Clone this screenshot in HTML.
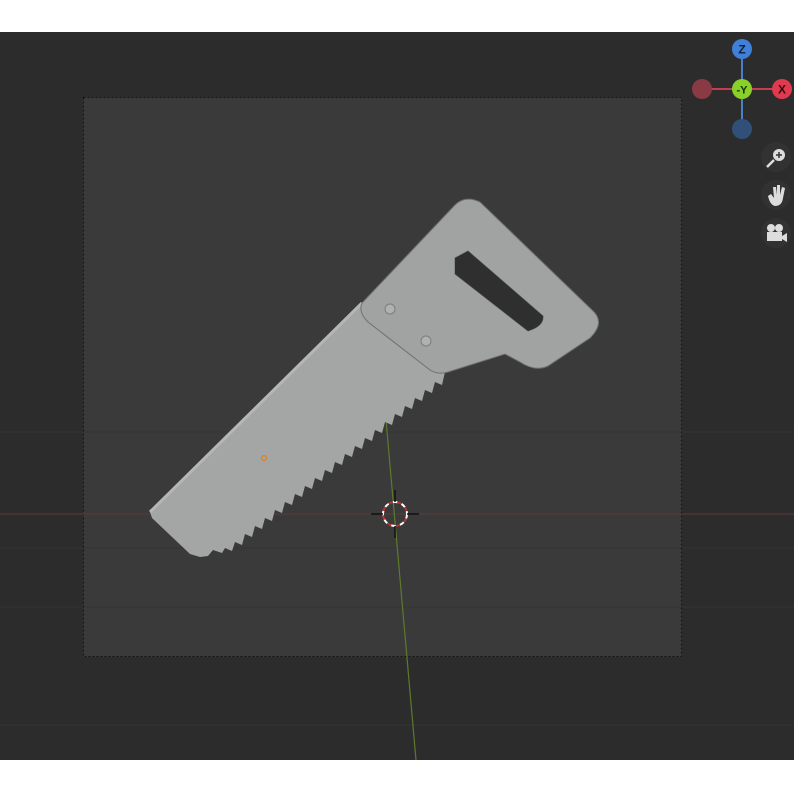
<!DOCTYPE html>
<html><head><style>
html,body{margin:0;padding:0;width:794px;height:794px;background:#fff;overflow:hidden;font-family:"Liberation Sans",sans-serif}
</style></head><body>
<svg width="794" height="794" xmlns="http://www.w3.org/2000/svg" style="position:absolute;left:0;top:0">
<rect x="0" y="32" width="794" height="728" fill="#2c2c2c"/>
<rect x="83" y="97" width="599" height="560" fill="#3a3a3a"/>
<g stroke="#343434" stroke-width="1">
<line x1="0" y1="432" x2="794" y2="432"/>
<line x1="0" y1="548" x2="794" y2="548"/>
<line x1="0" y1="607" x2="794" y2="607"/>
<line x1="0" y1="725" x2="794" y2="725"/>
</g>
<rect x="83.5" y="97.5" width="598" height="559" fill="none" stroke="#111" stroke-dasharray="2,2"/>
<line x1="0" y1="514" x2="794" y2="514" stroke="#5e3a3a" stroke-width="1"/>
<line x1="386" y1="420" x2="416" y2="760" stroke="#5c7a2c" stroke-width="1.2"/>
<path d="M150,512 L362,303 L445,372 L442,385 L435,382 L432,393 L425,390 L422,401 L415,398 L412,409 L405,406 L402,417 L395,414 L392,425 L385,422 L382,433 L375,430 L372,441 L365,438 L362,449 L355,446 L352,457 L345,454 L342,465 L335,462 L332,473 L325,470 L322,481 L315,478 L312,489 L305,486 L302,497 L295,494 L292,505 L285,502 L282,513 L275,510 L272,521 L265,518 L262,529 L255,526 L252,537 L245,534 L242,545 L235,542 L232,551 L225,548 L222,553 L213,550 L208,556 L200,557 L190,554 L152,518 Z" fill="#a4a6a6"/>
<path d="M150,512 L362,303" stroke="#b5b7b7" stroke-width="3"/>
<path d="M362,303 L455,205 Q465,195 480,202 L592,310 Q606,322 590,338 L548,366 Q535,372 520,362 L505,354 L448,372 Q438,375 430,370 L368,322 Q358,312 362,303 Z M455,258 L468,251 L543,316 Q544,326 528,331 L455,274 Z" fill="#a1a3a3" fill-rule="evenodd" stroke="#6f7171" stroke-width="1"/>
<path d="M455,258 L468,251 L543,316 Q544,326 528,331 L455,274 Z" fill="#2f2f2f"/>
<circle cx="390" cy="309" r="5" fill="#b0b2b2" stroke="#7c7e7e"/>
<circle cx="426" cy="341" r="5" fill="#b0b2b2" stroke="#7c7e7e"/>
<circle cx="264" cy="458" r="2.5" fill="none" stroke="#e08020" stroke-width="1.2"/>
<circle cx="395" cy="514" r="12" fill="none" stroke="#fff" stroke-width="2" stroke-dasharray="5,4"/>
<circle cx="395" cy="514" r="12" fill="none" stroke="#c03030" stroke-width="2" stroke-dasharray="4,5" stroke-dashoffset="4.5"/>
<g stroke="#111" stroke-width="1.5"><line x1="371" y1="514" x2="383" y2="514"/><line x1="407" y1="514" x2="419" y2="514"/><line x1="395" y1="490" x2="395" y2="502"/><line x1="395" y1="526" x2="395" y2="538"/></g>
<line x1="702" y1="89" x2="782" y2="89" stroke="#c04050" stroke-width="2"/>
<line x1="742" y1="49" x2="742" y2="129" stroke="#4a80c8" stroke-width="2"/>
<circle cx="702" cy="89" r="10" fill="#8a3a44"/>
<circle cx="742" cy="129" r="10" fill="#30507a"/>
<circle cx="742" cy="49" r="10" fill="#3f80d8"/>
<circle cx="782" cy="89" r="10" fill="#e03a50"/>
<circle cx="742" cy="89" r="10" fill="#8ad02a"/>
<text x="742" y="53.5" font-size="12" font-weight="bold" text-anchor="middle" fill="#10203a" font-family="Liberation Sans">Z</text>
<text x="782" y="93.5" font-size="12" font-weight="bold" text-anchor="middle" fill="#3a0a10" font-family="Liberation Sans">X</text>
<text x="742" y="93.5" font-size="11" font-weight="bold" text-anchor="middle" fill="#1a3008" font-family="Liberation Sans">-Y</text>
<circle cx="776" cy="157" r="15" fill="#323232"/>
<circle cx="776" cy="195" r="15" fill="#323232"/>
<circle cx="776" cy="233" r="15" fill="#323232"/>
<circle cx="779" cy="155" r="6" fill="#ddd"/>
<line x1="774" y1="160" x2="767" y2="167" stroke="#ddd" stroke-width="2.5"/>
<path d="M776,155h6M779,152v6" stroke="#333" stroke-width="1.5"/>
<path d="M768,196 L771,194 L774,198 L773,187 L776,187 L777,195 L777,185 L780,185 L780,195 L782,187 L785,188 L783,198 Q782,206 775,206 Q770,205 768,196Z" fill="#ddd"/>
<circle cx="771" cy="228" r="4" fill="#ddd"/><circle cx="779" cy="228" r="4" fill="#ddd"/>
<rect x="767" y="232" width="15" height="9" fill="#ddd"/><path d="M782,236 L787,233 L787,242 L782,239Z" fill="#ddd"/>
</svg>
</body></html>
